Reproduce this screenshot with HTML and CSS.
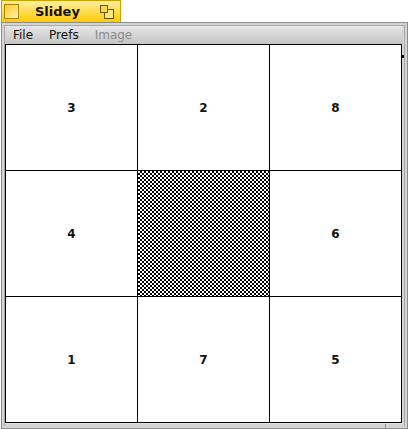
FILE: index.html
```html
<!DOCTYPE html>
<html lang="en">
<head>
  <meta charset="UTF-8" />
  <title>Slidey</title>
  <link rel="stylesheet" href="styles.css">
</head>
<body>
  <div class="tab">
    <span class="close-box"></span>
    <span class="title">Slidey</span>
    <svg class="zoom-box" width="14" height="14" viewBox="0 0 14 14">
      <rect x="4.5" y="4.5" width="9" height="9" fill="#ffe680" stroke="#6b5200"/>
      <rect x="0.5" y="0.5" width="7" height="7" fill="#ffd84a" stroke="#6b5200"/>
    </svg>
  </div>
  <div class="window">
    <div class="inner">
      <div class="menu">
        <span>File</span>
        <span>Prefs</span>
        <span class="disabled">Image</span>
      </div>
      <div class="board">
        <div class="cell">3</div>
        <div class="cell">2</div>
        <div class="cell">8</div>
        <div class="cell">4</div>
        <div class="cell empty"></div>
        <div class="cell">6</div>
        <div class="cell">1</div>
        <div class="cell">7</div>
        <div class="cell">5</div>
      </div>
      <div class="foot"></div>
    </div>
    <span class="tick"></span>
    <span class="grip"></span>
  </div>
</body>
</html>
```

FILE: styles.css
```css
body {
  margin: 0;
  background: #fff;
  font-family: "DejaVu Sans", sans-serif;
}

.tab {
  box-sizing: border-box;
  width: 120px;
  height: 22px;
  margin-left: 1px;
  padding: 0 6px 0 2px;
  display: flex;
  align-items: center;
  background: linear-gradient(#ffefa0, #ffcb00);
  border: 1px solid #c9a200;
  border-bottom: none;
}

.close-box {
  width: 13px;
  height: 13px;
  background: linear-gradient(135deg, #ffcb20, #fff2b8);
  border: 1px solid #a88400;
}

.title {
  flex: 1;
  padding-left: 16px;
  font-size: 13px;
  font-weight: bold;
  color: #111;
}

.window {
  position: relative;
  box-sizing: border-box;
  width: 407px;
  height: 407px;
  margin-left: 1px;
  padding: 2px;
  background: #d4d4d4;
  border: 1px solid #8c8c8c;
}

.inner {
  height: 100%;
  box-sizing: border-box;
  padding: 0 1px 0 0;
  border-top: 1px solid #a8a8a8;
  border-left: 1px solid #a8a8a8;
  border-right: 1px solid #a8a8a8;
}

.menu {
  height: 18px;
  padding-left: 8px;
  display: flex;
  align-items: center;
  gap: 16px;
  font-size: 12px;
  color: #111;
  background: linear-gradient(#e6e6e6, #c4c4c4);
}

.disabled {
  color: #8c8c8c;
}

.board {
  width: 397px;
  height: 379px;
  display: grid;
  grid-template-columns: repeat(3, 131px);
  grid-template-rows: repeat(3, 125px);
  gap: 1px;
  padding: 1px;
  box-sizing: border-box;
  background: #000;
}

.cell {
  display: flex;
  align-items: center;
  justify-content: center;
  background: #fff;
  font-size: 12px;
  font-weight: bold;
  color: #111;
}

.empty {
  background: repeating-conic-gradient(#000 0 25%, #fff 0 50%) 0 0 / 4px 4px;
}

.foot {
  height: 1px;
  background: #e8e8c0;
}

.tick {
  position: absolute;
  left: 400px;
  top: 32px;
  width: 2px;
  height: 3px;
  background: #000;
}

.grip {
  position: absolute;
  left: 383px;
  bottom: 0;
  width: 1px;
  height: 4px;
  background: #8c8c8c;
}
```
